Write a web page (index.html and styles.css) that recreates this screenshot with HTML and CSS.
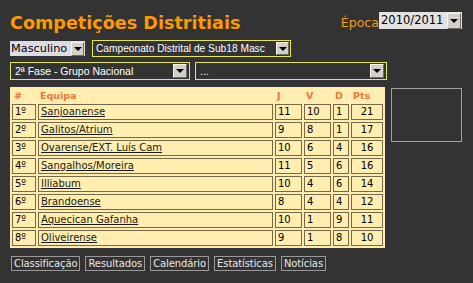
FILE: index.html
```html
<!DOCTYPE html>
<html lang="pt">
<head>
<meta charset="utf-8">
<title>Competições Distritiais</title>
<link rel="stylesheet" href="styles.css">
</head>
<body>
<div class="page">
  <header class="top">
    <h1 class="title">Competições Distritiais</h1>
    <div class="season">
      <span class="season-label">Época</span>
      <div class="sel sel-season"><span class="sel-val">2010/2011</span><span class="arrow"></span></div>
    </div>
  </header>

  <div class="row row-a">
    <div class="sel sel-gender"><span class="sel-val">Masculino</span><span class="arrow"></span></div>
    <div class="sel sel-dark sel-comp"><span class="sel-val">Campeonato Distrital de Sub18 Masc</span><span class="arrow"></span></div>
  </div>

  <div class="row row-b">
    <div class="sel sel-dark sel-phase"><span class="sel-val">2ª Fase - Grupo Nacional</span><span class="arrow"></span></div>
    <div class="sel sel-dark sel-round"><span class="sel-val">...</span><span class="arrow"></span></div>
  </div>

  <div class="main">
    <table class="standings">
      <colgroup>
        <col class="c-pos"><col class="c-team"><col class="c-j"><col class="c-v"><col class="c-d"><col class="c-pts">
      </colgroup>
      <thead>
        <tr><th>#</th><th>Equipa</th><th>J</th><th>V</th><th>D</th><th>Pts</th></tr>
      </thead>
      <tbody>
        <tr><td>1º</td><td><a href="#">Sanjoanense</a></td><td>11</td><td>10</td><td>1</td><td class="pts">21</td></tr>
        <tr><td>2º</td><td><a href="#">Galitos/Atrium</a></td><td>9</td><td>8</td><td>1</td><td class="pts">17</td></tr>
        <tr><td>3º</td><td><a href="#">Ovarense/EXT. Luís Cam</a></td><td>10</td><td>6</td><td>4</td><td class="pts">16</td></tr>
        <tr><td>4º</td><td><a href="#">Sangalhos/Moreira</a></td><td>11</td><td>5</td><td>6</td><td class="pts">16</td></tr>
        <tr><td>5º</td><td><a href="#">Illiabum</a></td><td>10</td><td>4</td><td>6</td><td class="pts">14</td></tr>
        <tr><td>6º</td><td><a href="#">Brandoense</a></td><td>8</td><td>4</td><td>4</td><td class="pts">12</td></tr>
        <tr><td>7º</td><td><a href="#">Aquecican Gafanha</a></td><td>10</td><td>1</td><td>9</td><td class="pts">11</td></tr>
        <tr><td>8º</td><td><a href="#">Oliveirense</a></td><td>9</td><td>1</td><td>8</td><td class="pts">10</td></tr>
      </tbody>
    </table>
    <div class="side-box"></div>
  </div>

  <nav class="tabs">
    <a href="#" class="tab">Classificação</a>
    <a href="#" class="tab">Resultados</a>
    <a href="#" class="tab">Calendário</a>
    <a href="#" class="tab">Estatísticas</a>
    <a href="#" class="tab">Notícias</a>
  </nav>
</div>
</body>
</html>
```

FILE: styles.css
```css
html, body {
  margin: 0;
  padding: 0;
  background: #333333;
}

body {
  font-family: "DejaVu Sans", Verdana, sans-serif;
  color: #000;
}

.page {
  width: 473px;
  height: 283px;
  padding: 13px 0 0 10px;
  box-sizing: border-box;
}

/* header */
.top {
  display: flex;
  align-items: flex-start;
  justify-content: space-between;
  width: 452px;
  height: 27px;
}

.title {
  margin: 0;
  font-size: 17.6px;
  line-height: 20px;
  font-weight: bold;
  color: #ff9900;
}

.season {
  display: flex;
  align-items: flex-start;
  margin-top: -1px;
}

.season-label {
  color: #f29a1a;
  font-size: 12.6px;
  line-height: 17px;
  padding-top: 2px;
}

/* fake selects */
.sel {
  display: flex;
  align-items: center;
  box-sizing: border-box;
  overflow: hidden;
}

.sel-val {
  flex: 1;
  min-width: 0;
  white-space: nowrap;
  overflow: hidden;
}

.arrow {
  flex: none;
  position: relative;
  width: 13px;
  height: 13px;
  box-sizing: border-box;
  background: #d4d0c8;
  border-top: 1px solid #f4f4f0;
  border-left: 1px solid #f4f4f0;
  border-right: 1px solid #6e6c68;
  border-bottom: 1px solid #6e6c68;
}

.arrow::after {
  content: "";
  position: absolute;
  left: 2px;
  top: 4px;
  border-left: 4px solid transparent;
  border-right: 4px solid transparent;
  border-top: 4px solid #000;
}

.sel-season {
  width: 83px;
  height: 17px;
  background: #e2e2e2;
  padding-right: 1px;
}

.sel-season .sel-val {
  font-size: 11.5px;
  line-height: 17px;
  padding-left: 2px;
  color: #000;
}

.sel-season .arrow {
  width: 14px;
  height: 16px;
}

.sel-season .arrow::after {
  left: 2px;
  top: 5px;
}

.row {
  display: flex;
  align-items: center;
}

.row-a {
  height: 17px;
  gap: 7px;
}

.sel-gender {
  width: 75px;
  height: 15px;
  background: #dcdce4;
}

.sel-gender .sel-val {
  font-size: 11.3px;
  line-height: 15px;
  padding-left: 1px;
  color: #000;
}

.sel-gender .arrow {
  height: 14px;
  width: 13px;
  margin-right: 1px;
}

.sel-dark {
  background: #333333;
  border: 1px solid #e6e65a;
  padding-right: 1px;
}

.sel-dark .sel-val {
  font-family: "Liberation Sans", Arial, sans-serif;
  font-size: 10.5px;
  color: #ffffff;
  padding-left: 3px;
}

.sel-comp {
  width: 199px;
  height: 17px;
}

.sel-comp .sel-val {
  font-size: 10.2px;
}

.row-b {
  margin-top: 5px;
  height: 18px;
  gap: 5px;
}

.sel-phase {
  width: 180px;
  height: 18px;
}

.sel-round {
  width: 192px;
  height: 18px;
}

.sel-phase .arrow,
.sel-round .arrow {
  width: 14px;
  height: 14px;
  margin-right: 1px;
}

.sel-phase .sel-val,
.sel-round .sel-val {
  padding-left: 4px;
}

/* standings */
.main {
  display: flex;
  align-items: flex-start;
  gap: 6px;
  margin-top: 7px;
}

.standings {
  background: #ffeeb0;
  border-collapse: separate;
  border-spacing: 2px;
  table-layout: fixed;
  width: 375px;
  font-size: 10px;
}

.c-pos { width: 24px; }
.c-team { width: 235px; }
.c-j { width: 27px; }
.c-v { width: 27px; }
.c-d { width: 16px; }
.c-pts { width: 32px; }

.standings th {
  text-align: left;
  color: #e8783c;
  font-size: 9.5px;
  font-weight: bold;
  line-height: 13px;
  height: 13px;
  padding: 0 0 0 2px;
}

.standings td {
  border: 1px solid #74694a;
  line-height: 14px;
  height: 14px;
  padding: 0 0 0 2px;
  white-space: nowrap;
  overflow: hidden;
  color: #000;
}

.standings td.pts {
  text-align: center;
  padding: 0;
}

.standings a {
  color: #1a1a1a;
  text-decoration: underline;
}

.side-box {
  width: 71px;
  height: 54px;
  box-sizing: border-box;
  border: 1px solid #a0a0a0;
  margin-top: 1px;
}

/* tabs */
.tabs {
  display: flex;
  gap: 5px;
  margin-top: 8px;
  padding-left: 1px;
}

.tab {
  display: block;
  font-size: 10px;
  line-height: 13px;
  padding: 0 2px;
  letter-spacing: -0.1px;
  color: #e6e6e6;
  text-decoration: none;
  border: 1px solid #9a9a9a;
}
```
